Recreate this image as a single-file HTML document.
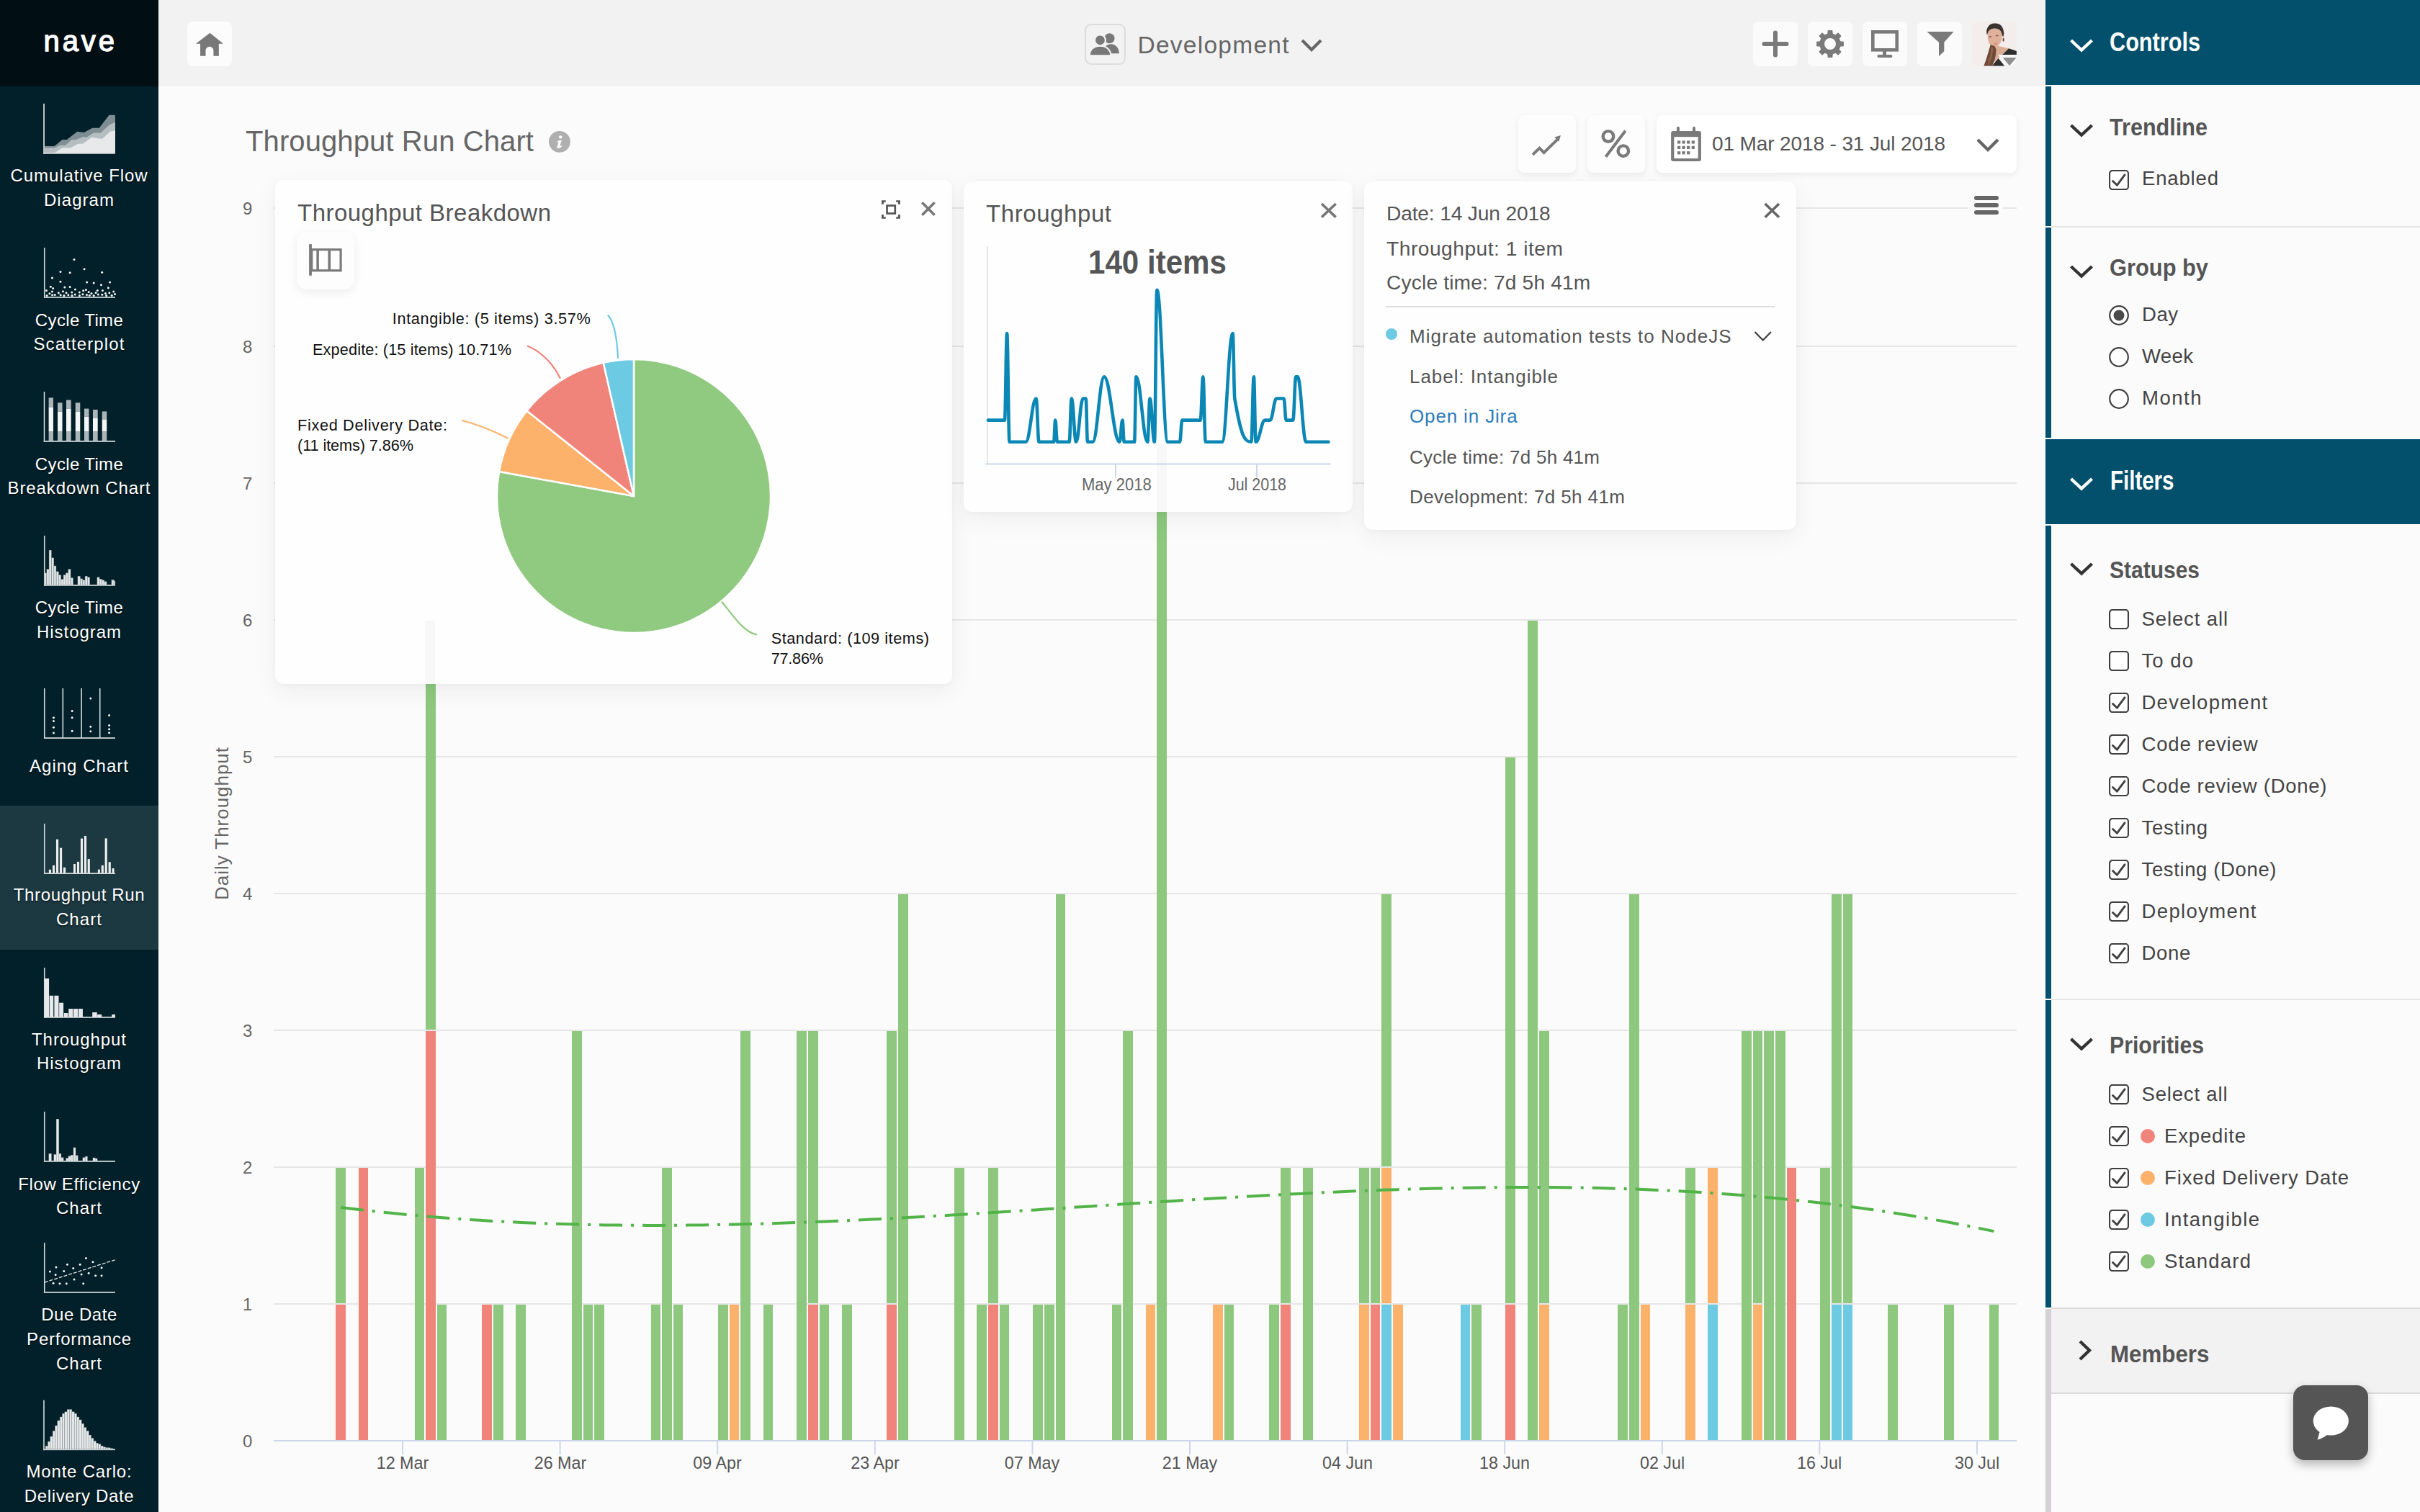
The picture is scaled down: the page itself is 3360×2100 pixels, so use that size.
<!DOCTYPE html>
<html><head><meta charset="utf-8"><style>
html,body{margin:0;padding:0;}
body{width:3360px;height:2100px;overflow:hidden;position:relative;background:#fbfbfb;font-family:'Liberation Sans', sans-serif;}
</style></head><body><div style="position:absolute;left:0px;top:0px;width:220px;height:2100px;background:#02202a"></div><div style="position:absolute;left:0px;top:0px;width:220px;height:120px;background:#010f15"></div><div style="position:absolute;left:0px;top:1119px;width:220px;height:200px;background:#1c3941"></div><div id="t0" style="position:absolute;top:37.30px;font-size:40px;line-height:40px;color:#fff;font-weight:400;white-space:pre;letter-spacing:3.917px;-webkit-text-stroke:1.3px #fff;left:60.50px;">nave</div><svg style="position:absolute;left:50px;top:134px;" width="120" height="120" viewBox="0 0 1512 1512"><rect x="128" y="125" width="22" height="880" style="fill:#d5dadb"/><rect x="128" y="981" width="1257" height="24" style="fill:#d5dadb"/><polygon fill="#7f8e93" points="150,870 320,870 460,755 540,755 720,615 840,630 985,550 1105,550 1280,325 1385,325 1385,982 150,982"/><polygon fill="#b5bfc2" points="150,900 320,900 420,855 515,855 625,755 690,760 830,705 880,715 1010,635 1130,635 1290,490 1385,455 1385,982 150,982"/><polygon fill="#e8e9ea" points="330,982 460,900 600,900 735,830 820,825 975,715 1080,735 1160,740 1300,610 1385,600 1385,982"/></svg><svg style="position:absolute;left:50px;top:334px;" width="120" height="120" viewBox="0 0 1512 1512"><rect x="138" y="125" width="20" height="880" style="fill:#d5dadb"/><rect x="138" y="983" width="1247" height="22" style="fill:#d5dadb"/><circle cx="667" cy="333" r="19" fill="#f4f5f5"/><circle cx="845" cy="500" r="19" fill="#f4f5f5"/><circle cx="428" cy="548" r="19" fill="#f4f5f5"/><circle cx="594" cy="563" r="19" fill="#f4f5f5"/><circle cx="1155" cy="557" r="19" fill="#f4f5f5"/><circle cx="283" cy="655" r="19" fill="#f4f5f5"/><circle cx="428" cy="720" r="19" fill="#f4f5f5"/><circle cx="890" cy="732" r="19" fill="#f4f5f5"/><circle cx="1010" cy="742" r="19" fill="#f4f5f5"/><circle cx="1292" cy="730" r="19" fill="#f4f5f5"/><circle cx="1140" cy="777" r="19" fill="#f4f5f5"/><circle cx="256" cy="810" r="19" fill="#f4f5f5"/><circle cx="298" cy="838" r="19" fill="#f4f5f5"/><circle cx="502" cy="818" r="19" fill="#f4f5f5"/><circle cx="594" cy="812" r="19" fill="#f4f5f5"/><circle cx="1265" cy="830" r="19" fill="#f4f5f5"/><circle cx="182" cy="875" r="19" fill="#f4f5f5"/><circle cx="686" cy="858" r="19" fill="#f4f5f5"/><circle cx="828" cy="878" r="19" fill="#f4f5f5"/><circle cx="875" cy="862" r="19" fill="#f4f5f5"/><circle cx="1075" cy="877" r="19" fill="#f4f5f5"/><circle cx="1165" cy="875" r="19" fill="#f4f5f5"/><circle cx="283" cy="895" r="19" fill="#f4f5f5"/><circle cx="472" cy="890" r="19" fill="#f4f5f5"/><circle cx="922" cy="900" r="19" fill="#f4f5f5"/><circle cx="1357" cy="895" r="19" fill="#f4f5f5"/><circle cx="238" cy="928" r="19" fill="#f4f5f5"/><circle cx="395" cy="917" r="19" fill="#f4f5f5"/><circle cx="530" cy="917" r="19" fill="#f4f5f5"/><circle cx="627" cy="908" r="19" fill="#f4f5f5"/><circle cx="760" cy="907" r="19" fill="#f4f5f5"/><circle cx="970" cy="925" r="19" fill="#f4f5f5"/><circle cx="1048" cy="915" r="19" fill="#f4f5f5"/><circle cx="1215" cy="925" r="19" fill="#f4f5f5"/><circle cx="1283" cy="918" r="19" fill="#f4f5f5"/><circle cx="190" cy="965" r="19" fill="#f4f5f5"/><circle cx="285" cy="955" r="19" fill="#f4f5f5"/><circle cx="330" cy="950" r="19" fill="#f4f5f5"/><circle cx="430" cy="955" r="19" fill="#f4f5f5"/><circle cx="490" cy="965" r="19" fill="#f4f5f5"/><circle cx="565" cy="955" r="19" fill="#f4f5f5"/><circle cx="630" cy="965" r="19" fill="#f4f5f5"/><circle cx="683" cy="945" r="19" fill="#f4f5f5"/><circle cx="762" cy="965" r="19" fill="#f4f5f5"/><circle cx="818" cy="942" r="19" fill="#f4f5f5"/><circle cx="888" cy="950" r="19" fill="#f4f5f5"/><circle cx="937" cy="960" r="19" fill="#f4f5f5"/><circle cx="1010" cy="965" r="19" fill="#f4f5f5"/><circle cx="1088" cy="945" r="19" fill="#f4f5f5"/><circle cx="1157" cy="948" r="19" fill="#f4f5f5"/><circle cx="1230" cy="965" r="19" fill="#f4f5f5"/><circle cx="1325" cy="960" r="19" fill="#f4f5f5"/><circle cx="1380" cy="940" r="19" fill="#f4f5f5"/></svg><svg style="position:absolute;left:50px;top:534px;" width="120" height="120" viewBox="0 0 1512 1512"><rect x="135" y="126" width="20" height="879" style="fill:#d5dadb"/><rect x="135" y="983" width="1251" height="22" style="fill:#d5dadb"/><rect x="222" y="232" width="80" height="164" fill="#aab5b8"/><rect x="222" y="396" width="80" height="431" fill="#f5f6f6"/><rect x="222" y="827" width="80" height="160" fill="#aab5b8"/><rect x="378" y="319" width="82" height="158" fill="#aab5b8"/><rect x="378" y="477" width="82" height="350" fill="#f5f6f6"/><rect x="378" y="827" width="82" height="160" fill="#aab5b8"/><rect x="529" y="271" width="84" height="152" fill="#aab5b8"/><rect x="529" y="423" width="84" height="404" fill="#f5f6f6"/><rect x="529" y="827" width="84" height="160" fill="#aab5b8"/><rect x="690" y="319" width="82" height="158" fill="#aab5b8"/><rect x="690" y="477" width="82" height="350" fill="#f5f6f6"/><rect x="690" y="827" width="82" height="160" fill="#aab5b8"/><rect x="844" y="423" width="82" height="140" fill="#aab5b8"/><rect x="844" y="563" width="82" height="264" fill="#f5f6f6"/><rect x="844" y="827" width="82" height="160" fill="#aab5b8"/><rect x="995" y="441" width="85" height="151" fill="#aab5b8"/><rect x="995" y="592" width="85" height="235" fill="#f5f6f6"/><rect x="995" y="827" width="85" height="160" fill="#aab5b8"/><rect x="1156" y="472" width="82" height="138" fill="#aab5b8"/><rect x="1156" y="610" width="82" height="217" fill="#f5f6f6"/><rect x="1156" y="827" width="82" height="160" fill="#aab5b8"/></svg><svg style="position:absolute;left:50px;top:734px;" width="120" height="120" viewBox="0 0 1512 1512"><rect x="138" y="125" width="20" height="880" style="fill:#d5dadb"/><rect x="138" y="983" width="1247" height="22" style="fill:#d5dadb"/><rect x="150" y="780" width="35" height="210" fill="#e3e6e7" stroke="#8a979b" stroke-width="5"/><rect x="188" y="715" width="40" height="275" fill="#e3e6e7" stroke="#8a979b" stroke-width="5"/><rect x="228" y="380" width="40" height="610" fill="#e3e6e7" stroke="#8a979b" stroke-width="5"/><rect x="272" y="515" width="40" height="475" fill="#e3e6e7" stroke="#8a979b" stroke-width="5"/><rect x="315" y="655" width="37" height="335" fill="#e3e6e7" stroke="#8a979b" stroke-width="5"/><rect x="355" y="755" width="40" height="235" fill="#e3e6e7" stroke="#8a979b" stroke-width="5"/><rect x="398" y="815" width="39" height="175" fill="#e3e6e7" stroke="#8a979b" stroke-width="5"/><rect x="440" y="890" width="40" height="100" fill="#e3e6e7" stroke="#8a979b" stroke-width="5"/><rect x="480" y="815" width="40" height="175" fill="#e3e6e7" stroke="#8a979b" stroke-width="5"/><rect x="523" y="780" width="40" height="210" fill="#e3e6e7" stroke="#8a979b" stroke-width="5"/><rect x="565" y="715" width="40" height="275" fill="#e3e6e7" stroke="#8a979b" stroke-width="5"/><rect x="610" y="865" width="38" height="125" fill="#e3e6e7" stroke="#8a979b" stroke-width="5"/><rect x="730" y="835" width="42" height="155" fill="#e3e6e7" stroke="#8a979b" stroke-width="5"/><rect x="775" y="880" width="40" height="110" fill="#e3e6e7" stroke="#8a979b" stroke-width="5"/><rect x="818" y="905" width="37" height="85" fill="#e3e6e7" stroke="#8a979b" stroke-width="5"/><rect x="858" y="835" width="40" height="155" fill="#e3e6e7" stroke="#8a979b" stroke-width="5"/><rect x="900" y="855" width="40" height="135" fill="#e3e6e7" stroke="#8a979b" stroke-width="5"/><rect x="1070" y="855" width="40" height="135" fill="#e3e6e7" stroke="#8a979b" stroke-width="5"/><rect x="1112" y="885" width="40" height="105" fill="#e3e6e7" stroke="#8a979b" stroke-width="5"/><rect x="1155" y="905" width="40" height="85" fill="#e3e6e7" stroke="#8a979b" stroke-width="5"/><rect x="1195" y="930" width="40" height="60" fill="#e3e6e7" stroke="#8a979b" stroke-width="5"/><rect x="1322" y="900" width="40" height="90" fill="#e3e6e7" stroke="#8a979b" stroke-width="5"/><rect x="1362" y="918" width="23" height="72" fill="#e3e6e7" stroke="#8a979b" stroke-width="5"/></svg><svg style="position:absolute;left:50px;top:946px;" width="120" height="120" viewBox="0 0 1512 1512"><rect x="138" y="985" width="1247" height="22" style="fill:#d5dadb"/><rect x="138" y="125" width="20" height="875" style="fill:#d5dadb"/><rect x="460" y="125" width="20" height="875" style="fill:#d5dadb"/><rect x="785" y="125" width="20" height="875" style="fill:#d5dadb"/><rect x="1108" y="125" width="20" height="875" style="fill:#d5dadb"/><circle cx="308" cy="640" r="19" fill="#f4f5f5"/><circle cx="308" cy="698" r="19" fill="#f4f5f5"/><circle cx="308" cy="810" r="19" fill="#f4f5f5"/><circle cx="308" cy="907" r="19" fill="#f4f5f5"/><circle cx="632" cy="522" r="19" fill="#f4f5f5"/><circle cx="632" cy="638" r="19" fill="#f4f5f5"/><circle cx="632" cy="872" r="19" fill="#f4f5f5"/><circle cx="955" cy="302" r="19" fill="#f4f5f5"/><circle cx="955" cy="798" r="19" fill="#f4f5f5"/><circle cx="955" cy="880" r="19" fill="#f4f5f5"/><circle cx="1280" cy="598" r="19" fill="#f4f5f5"/><circle cx="1280" cy="775" r="19" fill="#f4f5f5"/><circle cx="1280" cy="840" r="19" fill="#f4f5f5"/><circle cx="1280" cy="905" r="19" fill="#f4f5f5"/></svg><svg style="position:absolute;left:50px;top:1134px;" width="120" height="120" viewBox="0 0 1512 1512"><rect x="138" y="125" width="20" height="883" style="fill:#d5dadb"/><rect x="138" y="986" width="1247" height="22" style="fill:#d5dadb"/><rect x="225" y="930" width="40" height="60" fill="#eceeee"/><rect x="290" y="855" width="38" height="135" fill="#eceeee"/><rect x="352" y="400" width="40" height="590" fill="#eceeee"/><rect x="415" y="550" width="40" height="440" fill="#eceeee"/><rect x="478" y="892" width="40" height="98" fill="#eceeee"/><rect x="655" y="832" width="38" height="158" fill="#eceeee"/><rect x="717" y="792" width="40" height="198" fill="#eceeee"/><rect x="780" y="385" width="40" height="605" fill="#eceeee"/><rect x="843" y="340" width="40" height="650" fill="#eceeee"/><rect x="903" y="745" width="40" height="245" fill="#eceeee"/><rect x="1082" y="928" width="38" height="62" fill="#eceeee"/><rect x="1143" y="855" width="40" height="135" fill="#eceeee"/><rect x="1205" y="383" width="40" height="607" fill="#eceeee"/><rect x="1268" y="797" width="40" height="193" fill="#eceeee"/><rect x="1330" y="907" width="38" height="83" fill="#eceeee"/></svg><svg style="position:absolute;left:50px;top:1334px;" width="120" height="120" viewBox="0 0 1512 1512"><rect x="138" y="125" width="20" height="880" style="fill:#d5dadb"/><rect x="138" y="983" width="1247" height="22" style="fill:#d5dadb"/><rect x="150" y="315" width="78" height="675" fill="#e6e8e9"/><rect x="235" y="615" width="70" height="375" fill="#e6e8e9"/><rect x="320" y="615" width="77" height="375" fill="#e6e8e9"/><rect x="405" y="740" width="75" height="250" fill="#e6e8e9"/><rect x="490" y="920" width="70" height="70" fill="#e6e8e9"/><rect x="570" y="845" width="75" height="145" fill="#e6e8e9"/><rect x="655" y="845" width="77" height="145" fill="#e6e8e9"/><rect x="742" y="845" width="76" height="145" fill="#e6e8e9"/><rect x="985" y="908" width="83" height="82" fill="#e6e8e9"/><rect x="1072" y="945" width="78" height="45" fill="#e6e8e9"/><rect x="1325" y="945" width="60" height="45" fill="#e6e8e9"/></svg><svg style="position:absolute;left:50px;top:1534px;" width="120" height="120" viewBox="0 0 1512 1512"><rect x="138" y="125" width="20" height="880" style="fill:#d5dadb"/><rect x="138" y="983" width="1247" height="22" style="fill:#d5dadb"/><rect x="225" y="860" width="45" height="130" fill="#e6e8e9" stroke="#9aa5a8" stroke-width="4"/><rect x="313" y="875" width="42" height="115" fill="#e6e8e9" stroke="#9aa5a8" stroke-width="4"/><rect x="355" y="255" width="45" height="735" fill="#e6e8e9" stroke="#9aa5a8" stroke-width="4"/><rect x="400" y="860" width="40" height="130" fill="#e6e8e9" stroke="#9aa5a8" stroke-width="4"/><rect x="440" y="930" width="40" height="60" fill="#e6e8e9" stroke="#9aa5a8" stroke-width="4"/><rect x="527" y="940" width="40" height="50" fill="#e6e8e9" stroke="#9aa5a8" stroke-width="4"/><rect x="567" y="905" width="40" height="85" fill="#e6e8e9" stroke="#9aa5a8" stroke-width="4"/><rect x="607" y="885" width="43" height="105" fill="#e6e8e9" stroke="#9aa5a8" stroke-width="4"/><rect x="655" y="755" width="38" height="235" fill="#e6e8e9" stroke="#9aa5a8" stroke-width="4"/><rect x="697" y="893" width="36" height="97" fill="#e6e8e9" stroke="#9aa5a8" stroke-width="4"/><rect x="818" y="930" width="39" height="60" fill="#e6e8e9" stroke="#9aa5a8" stroke-width="4"/><rect x="860" y="910" width="40" height="80" fill="#e6e8e9" stroke="#9aa5a8" stroke-width="4"/><rect x="995" y="933" width="40" height="57" fill="#e6e8e9" stroke="#9aa5a8" stroke-width="4"/><rect x="1035" y="945" width="37" height="45" fill="#e6e8e9" stroke="#9aa5a8" stroke-width="4"/></svg><svg style="position:absolute;left:50px;top:1716px;" width="120" height="120" viewBox="0 0 1512 1512"><rect x="138" y="125" width="20" height="880" style="fill:#d5dadb"/><rect x="138" y="983" width="1247" height="22" style="fill:#d5dadb"/><line x1="150" y1="820" x2="1385" y2="425" stroke="#e8eaeb" stroke-width="16" stroke-dasharray="62,26"/><circle cx="875" cy="398" r="19" fill="#f4f5f5"/><circle cx="995" cy="462" r="19" fill="#f4f5f5"/><circle cx="548" cy="508" r="19" fill="#f4f5f5"/><circle cx="770" cy="508" r="19" fill="#f4f5f5"/><circle cx="352" cy="555" r="19" fill="#f4f5f5"/><circle cx="652" cy="572" r="19" fill="#f4f5f5"/><circle cx="1147" cy="565" r="19" fill="#f4f5f5"/><circle cx="245" cy="630" r="19" fill="#f4f5f5"/><circle cx="488" cy="625" r="19" fill="#f4f5f5"/><circle cx="342" cy="688" r="19" fill="#f4f5f5"/><circle cx="795" cy="680" r="19" fill="#f4f5f5"/><circle cx="922" cy="658" r="19" fill="#f4f5f5"/><circle cx="1042" cy="703" r="19" fill="#f4f5f5"/><circle cx="1147" cy="703" r="19" fill="#f4f5f5"/><circle cx="668" cy="768" r="19" fill="#f4f5f5"/><circle cx="303" cy="835" r="19" fill="#f4f5f5"/><circle cx="415" cy="842" r="19" fill="#f4f5f5"/><circle cx="533" cy="840" r="19" fill="#f4f5f5"/><circle cx="828" cy="842" r="19" fill="#f4f5f5"/></svg><svg style="position:absolute;left:50px;top:1934px;" width="120" height="120" viewBox="0 0 1512 1512"><rect x="128" y="135" width="20" height="875" style="fill:#d5dadb"/><rect x="128" y="988" width="1257" height="22" style="fill:#d5dadb"/><rect x="165.0" y="935" width="42.1" height="57" fill="#e6e8e9" stroke="#7d8b8f" stroke-width="5"/><rect x="207.1" y="858" width="42.1" height="134" fill="#e6e8e9" stroke="#7d8b8f" stroke-width="5"/><rect x="249.2" y="770" width="42.1" height="222" fill="#e6e8e9" stroke="#7d8b8f" stroke-width="5"/><rect x="291.3" y="672" width="42.1" height="320" fill="#e6e8e9" stroke="#7d8b8f" stroke-width="5"/><rect x="333.4" y="580" width="42.1" height="412" fill="#e6e8e9" stroke="#7d8b8f" stroke-width="5"/><rect x="375.5" y="492" width="42.1" height="500" fill="#e6e8e9" stroke="#7d8b8f" stroke-width="5"/><rect x="417.6" y="428" width="42.1" height="564" fill="#e6e8e9" stroke="#7d8b8f" stroke-width="5"/><rect x="459.7" y="368" width="42.1" height="624" fill="#e6e8e9" stroke="#7d8b8f" stroke-width="5"/><rect x="501.8" y="338" width="42.1" height="654" fill="#e6e8e9" stroke="#7d8b8f" stroke-width="5"/><rect x="543.9" y="298" width="42.1" height="694" fill="#e6e8e9" stroke="#7d8b8f" stroke-width="5"/><rect x="586.0" y="298" width="42.1" height="694" fill="#e6e8e9" stroke="#7d8b8f" stroke-width="5"/><rect x="628.1" y="338" width="42.1" height="654" fill="#e6e8e9" stroke="#7d8b8f" stroke-width="5"/><rect x="670.2" y="368" width="42.1" height="624" fill="#e6e8e9" stroke="#7d8b8f" stroke-width="5"/><rect x="712.3" y="428" width="42.1" height="564" fill="#e6e8e9" stroke="#7d8b8f" stroke-width="5"/><rect x="754.4" y="478" width="42.1" height="514" fill="#e6e8e9" stroke="#7d8b8f" stroke-width="5"/><rect x="796.5" y="545" width="42.1" height="447" fill="#e6e8e9" stroke="#7d8b8f" stroke-width="5"/><rect x="838.6" y="612" width="42.1" height="380" fill="#e6e8e9" stroke="#7d8b8f" stroke-width="5"/><rect x="880.7" y="672" width="42.1" height="320" fill="#e6e8e9" stroke="#7d8b8f" stroke-width="5"/><rect x="922.8" y="745" width="42.1" height="247" fill="#e6e8e9" stroke="#7d8b8f" stroke-width="5"/><rect x="964.9" y="800" width="42.1" height="192" fill="#e6e8e9" stroke="#7d8b8f" stroke-width="5"/><rect x="1007.0" y="848" width="42.1" height="144" fill="#e6e8e9" stroke="#7d8b8f" stroke-width="5"/><rect x="1049.1" y="885" width="42.1" height="107" fill="#e6e8e9" stroke="#7d8b8f" stroke-width="5"/><rect x="1091.2" y="905" width="42.1" height="87" fill="#e6e8e9" stroke="#7d8b8f" stroke-width="5"/><rect x="1133.3" y="935" width="42.1" height="57" fill="#e6e8e9" stroke="#7d8b8f" stroke-width="5"/><rect x="1175.4" y="955" width="42.1" height="37" fill="#e6e8e9" stroke="#7d8b8f" stroke-width="5"/><rect x="1217.5" y="965" width="42.1" height="27" fill="#e6e8e9" stroke="#7d8b8f" stroke-width="5"/><rect x="1259.6" y="968" width="42.1" height="24" fill="#e6e8e9" stroke="#7d8b8f" stroke-width="5"/><rect x="1301.7" y="978" width="42.1" height="14" fill="#e6e8e9" stroke="#7d8b8f" stroke-width="5"/></svg><div id="t1" style="position:absolute;top:232.10px;font-size:24px;line-height:24px;color:#fff;font-weight:400;white-space:pre;letter-spacing:0.901px;text-shadow:0 2px 2px rgba(0,0,0,0.55);left:-90.00px;width:400px;text-align:center;">Cumulative Flow</div><div id="t2" style="position:absolute;top:266.10px;font-size:24px;line-height:24px;color:#fff;font-weight:400;white-space:pre;letter-spacing:1.049px;text-shadow:0 2px 2px rgba(0,0,0,0.55);left:-90.00px;width:400px;text-align:center;">Diagram</div><div id="t3" style="position:absolute;top:432.50px;font-size:24px;line-height:24px;color:#fff;font-weight:400;white-space:pre;letter-spacing:0.368px;text-shadow:0 2px 2px rgba(0,0,0,0.55);left:-90.00px;width:400px;text-align:center;">Cycle Time</div><div id="t4" style="position:absolute;top:466.10px;font-size:24px;line-height:24px;color:#fff;font-weight:400;white-space:pre;letter-spacing:1.127px;text-shadow:0 2px 2px rgba(0,0,0,0.55);left:-90.00px;width:400px;text-align:center;">Scatterplot</div><div id="t5" style="position:absolute;top:633.10px;font-size:24px;line-height:24px;color:#fff;font-weight:400;white-space:pre;letter-spacing:0.368px;text-shadow:0 2px 2px rgba(0,0,0,0.55);left:-90.00px;width:400px;text-align:center;">Cycle Time</div><div id="t6" style="position:absolute;top:666.10px;font-size:24px;line-height:24px;color:#fff;font-weight:400;white-space:pre;letter-spacing:0.897px;text-shadow:0 2px 2px rgba(0,0,0,0.55);left:-90.00px;width:400px;text-align:center;">Breakdown Chart</div><div id="t7" style="position:absolute;top:832.10px;font-size:24px;line-height:24px;color:#fff;font-weight:400;white-space:pre;letter-spacing:0.368px;text-shadow:0 2px 2px rgba(0,0,0,0.55);left:-90.00px;width:400px;text-align:center;">Cycle Time</div><div id="t8" style="position:absolute;top:866.10px;font-size:24px;line-height:24px;color:#fff;font-weight:400;white-space:pre;letter-spacing:0.955px;text-shadow:0 2px 2px rgba(0,0,0,0.55);left:-90.00px;width:400px;text-align:center;">Histogram</div><div id="t9" style="position:absolute;top:1052.10px;font-size:24px;line-height:24px;color:#fff;font-weight:400;white-space:pre;letter-spacing:1.025px;text-shadow:0 2px 2px rgba(0,0,0,0.55);left:-90.00px;width:400px;text-align:center;">Aging Chart</div><div id="t10" style="position:absolute;top:1231.10px;font-size:24px;line-height:24px;color:#fff;font-weight:400;white-space:pre;letter-spacing:0.657px;text-shadow:0 2px 2px rgba(0,0,0,0.55);left:-90.00px;width:400px;text-align:center;">Throughput Run</div><div id="t11" style="position:absolute;top:1265.10px;font-size:24px;line-height:24px;color:#fff;font-weight:400;white-space:pre;letter-spacing:1.078px;text-shadow:0 2px 2px rgba(0,0,0,0.55);left:-90.00px;width:400px;text-align:center;">Chart</div><div id="t12" style="position:absolute;top:1432.10px;font-size:24px;line-height:24px;color:#fff;font-weight:400;white-space:pre;letter-spacing:0.915px;text-shadow:0 2px 2px rgba(0,0,0,0.55);left:-90.00px;width:400px;text-align:center;">Throughput</div><div id="t13" style="position:absolute;top:1465.10px;font-size:24px;line-height:24px;color:#fff;font-weight:400;white-space:pre;letter-spacing:0.955px;text-shadow:0 2px 2px rgba(0,0,0,0.55);left:-90.00px;width:400px;text-align:center;">Histogram</div><div id="t14" style="position:absolute;top:1632.70px;font-size:24px;line-height:24px;color:#fff;font-weight:400;white-space:pre;letter-spacing:0.671px;text-shadow:0 2px 2px rgba(0,0,0,0.55);left:-90.00px;width:400px;text-align:center;">Flow Efficiency</div><div id="t15" style="position:absolute;top:1666.10px;font-size:24px;line-height:24px;color:#fff;font-weight:400;white-space:pre;letter-spacing:1.078px;text-shadow:0 2px 2px rgba(0,0,0,0.55);left:-90.00px;width:400px;text-align:center;">Chart</div><div id="t16" style="position:absolute;top:1814.10px;font-size:24px;line-height:24px;color:#fff;font-weight:400;white-space:pre;letter-spacing:0.516px;text-shadow:0 2px 2px rgba(0,0,0,0.55);left:-90.00px;width:400px;text-align:center;">Due Date</div><div id="t17" style="position:absolute;top:1848.10px;font-size:24px;line-height:24px;color:#fff;font-weight:400;white-space:pre;letter-spacing:0.761px;text-shadow:0 2px 2px rgba(0,0,0,0.55);left:-90.00px;width:400px;text-align:center;">Performance</div><div id="t18" style="position:absolute;top:1882.10px;font-size:24px;line-height:24px;color:#fff;font-weight:400;white-space:pre;letter-spacing:1.078px;text-shadow:0 2px 2px rgba(0,0,0,0.55);left:-90.00px;width:400px;text-align:center;">Chart</div><div id="t19" style="position:absolute;top:2032.10px;font-size:24px;line-height:24px;color:#fff;font-weight:400;white-space:pre;letter-spacing:0.783px;text-shadow:0 2px 2px rgba(0,0,0,0.55);left:-90.00px;width:400px;text-align:center;">Monte Carlo:</div><div id="t20" style="position:absolute;top:2066.10px;font-size:24px;line-height:24px;color:#fff;font-weight:400;white-space:pre;letter-spacing:0.663px;text-shadow:0 2px 2px rgba(0,0,0,0.55);left:-90.00px;width:400px;text-align:center;">Delivery Date</div><div style="position:absolute;left:220px;top:0px;width:2620px;height:120px;background:#f2f2f2"></div><div style="position:absolute;left:260px;top:30px;width:62px;height:62px;background:#fcfcfc;border-radius:8px"></div><svg style="position:absolute;left:255px;top:25px;" width="75" height="75" viewBox="0 0 1512 1512"><path fill="#787878" d="M340,720 L735,420 L1110,720 L985,720 L985,1065 L835,1065 L835,910 A110,110 0 0 0 615,910 L615,1065 L465,1065 L465,720 Z"/></svg><div style="position:absolute;left:1506px;top:33px;width:53px;height:53px;border:2px solid #dcdcdc;border-radius:9px"></div><svg style="position:absolute;left:1480px;top:20px;" width="380" height="90" viewBox="0 0 2420 573"><path fill="#787878" d="M330,345 C330,290 360,262 400,262 C440,262 470,300 470,345 Z"/><circle cx="385" cy="212" r="45" fill="#787878"/><path fill="#787878" stroke="#f2f2f2" stroke-width="14" d="M208,365 C208,310 250,278 302,278 C352,278 397,310 397,365 Z"/><circle cx="302" cy="228" r="48" fill="#787878" stroke="#f2f2f2" stroke-width="14"/></svg><div id="t21" style="position:absolute;top:46.03px;font-size:33.5px;line-height:33.5px;color:#666;font-weight:400;white-space:pre;letter-spacing:1.261px;left:1579.50px;">Development</div><svg style="position:absolute;left:1800px;top:45px;" width="40" height="35" viewBox="0 0 40 35"><polyline points="8,11 21,24 34,11" fill="none" stroke="#666" stroke-width="4.2"/></svg><div style="position:absolute;left:2434px;top:30px;width:62px;height:62px;background:#fbfbfb;border-radius:8px"></div><div style="position:absolute;left:2510px;top:30px;width:62px;height:62px;background:#fbfbfb;border-radius:8px"></div><div style="position:absolute;left:2586px;top:30px;width:62px;height:62px;background:#fbfbfb;border-radius:8px"></div><div style="position:absolute;left:2662px;top:30px;width:62px;height:62px;background:#fbfbfb;border-radius:8px"></div><svg style="position:absolute;left:2434px;top:30px;" width="62" height="62" viewBox="0 0 62 62"><path d="M31,15.5 V46.5 M15.5,31 H46.5" stroke="#7a7a7a" stroke-width="6" stroke-linecap="round"/></svg><svg style="position:absolute;left:2510px;top:30px;" width="62" height="62" viewBox="0 0 62 62"><path fill="#7a7a7a" fill-rule="evenodd" d="M27.20,16.70 L27.75,12.08 L34.25,12.08 L34.80,16.70 L38.42,18.20 L42.08,15.32 L46.68,19.92 L43.80,23.58 L45.30,27.20 L49.92,27.75 L49.92,34.25 L45.30,34.80 L43.80,38.42 L46.68,42.08 L42.08,46.68 L38.42,43.80 L34.80,45.30 L34.25,49.92 L27.75,49.92 L27.20,45.30 L23.58,43.80 L19.92,46.68 L15.32,42.08 L18.20,38.42 L16.70,34.80 L12.08,34.25 L12.08,27.75 L16.70,27.20 L18.20,23.58 L15.32,19.92 L19.92,15.32 L23.58,18.20 Z M39,31 A8,8 0 1 0 23,31 A8,8 0 1 0 39,31 Z"/></svg><svg style="position:absolute;left:2586px;top:30px;" width="62" height="62" viewBox="0 0 62 62"><rect x="14.3" y="14.3" width="33.4" height="25" fill="none" stroke="#7a7a7a" stroke-width="4.6"/><rect x="28" y="41" width="5" height="5" fill="#7a7a7a"/><rect x="20.4" y="46" width="21" height="4" rx="2" fill="#7a7a7a"/></svg><svg style="position:absolute;left:2662px;top:30px;" width="62" height="62" viewBox="0 0 62 62"><path fill="#7a7a7a" d="M13.4,14 L50.6,14 L37.3,28.8 L37.3,41.2 L30,47.9 L30,28.8 Z"/></svg><svg style="position:absolute;left:2730px;top:25px;" width="80" height="75" viewBox="0 0 1613 1512"><defs><clipPath id="avc"><rect x="165" y="100" width="1245" height="1245" rx="150"/></clipPath></defs><g clip-path="url(#avc)"><rect x="0" y="0" width="1613" height="1512" fill="#f3eeeb"/><path fill="#dcae98" d="M690,760 L905,785 L1190,850 L1010,1030 L900,1130 L810,1240 L700,1000 Z"/><path fill="#dfb09a" d="M598,400 C620,320 700,290 800,290 C930,290 1000,350 1005,470 C1010,640 930,800 800,810 C700,815 620,720 600,560 Z"/><ellipse cx="672" cy="525" rx="42" ry="20" fill="#8a6a60"/><ellipse cx="862" cy="495" rx="42" ry="20" fill="#8a6a60"/><ellipse cx="830" cy="722" rx="55" ry="22" fill="#d98a78"/><ellipse cx="1040" cy="610" rx="22" ry="55" fill="#6e4a38"/><path fill="#3b3330" d="M585,480 C545,360 580,240 680,175 C740,140 860,140 930,175 C1010,220 1050,320 1055,440 L1035,540 L1000,470 C990,360 930,300 800,290 C700,290 630,330 600,420 Z"/><path fill="#6e4a38" d="M680,745 L800,790 L838,880 L830,1010 L790,1200 L725,1345 L490,1345 L560,1150 L620,950 Z"/><path fill="#8a6048" d="M700,800 L760,830 L720,1100 L640,1300 L600,1300 L680,1000 Z"/><path fill="#2e2e2e" d="M1190,850 L1410,925 L1410,1030 L1010,1030 Z M900,1130 L1075,1345 L720,1345 L805,1240 Z"/><path fill="#f7f7f7" d="M895,1030 L1410,1030 L1410,1345 L1080,1345 Z"/><path fill="#8f8f8f" d="M1020,1110 L1405,1110 L1210,1335 Z"/></g></svg><div id="t22" style="position:absolute;top:176.00px;font-size:40px;line-height:40px;color:#666;font-weight:400;white-space:pre;letter-spacing:0.104px;left:341.00px;">Throughput Run Chart</div><svg style="position:absolute;left:755px;top:175px;" width="45" height="45" viewBox="0 0 1512 1512"><circle cx="735" cy="735" r="500" fill="#afafaf"/><ellipse cx="780" cy="515" rx="78" ry="72" fill="#fff"/><path fill="#fff" d="M605,740 C650,700 730,668 800,662 L838,662 L752,905 C742,945 775,945 842,900 L858,925 C800,995 725,1045 668,1045 C618,1045 606,1000 628,940 L690,765 C682,742 645,752 612,765 Z"/></svg><div style="position:absolute;left:2108px;top:160px;width:80px;height:80px;background:#fdfdfd;border-radius:8px;box-shadow:0 3px 8px rgba(0,0,0,0.07);"></div><div style="position:absolute;left:2204px;top:160px;width:80px;height:80px;background:#fdfdfd;border-radius:8px;box-shadow:0 3px 8px rgba(0,0,0,0.07);"></div><div style="position:absolute;left:2300px;top:160px;width:500px;height:80px;background:#fff;border-radius:8px;box-shadow:0 3px 8px rgba(0,0,0,0.07);"></div><svg style="position:absolute;left:2108px;top:160px;" width="176" height="80" viewBox="0 0 2420 1100"><polyline points="275,755 405,630 490,715 745,465" fill="none" stroke="#7a7a7a" stroke-width="55"/><polygon points="690,420 810,385 775,505" fill="#7a7a7a"/><circle cx="1718" cy="405" r="100" fill="none" stroke="#7a7a7a" stroke-width="60"/><circle cx="2005" cy="683" r="100" fill="none" stroke="#7a7a7a" stroke-width="60"/><line x1="1670" y1="795" x2="2045" y2="300" stroke="#7a7a7a" stroke-width="55"/></svg><svg style="position:absolute;left:2300px;top:160px;" width="100" height="80" viewBox="0 0 1890 1512"><rect x="380" y="415" width="790" height="795" rx="60" fill="#7a7a7a"/><rect x="460" y="570" width="630" height="565" fill="#fff"/><rect x="528" y="300" width="75" height="140" rx="37" fill="#7a7a7a"/><rect x="945" y="300" width="75" height="140" rx="37" fill="#7a7a7a"/><rect x="548" y="668" width="80" height="80" fill="#7a7a7a"/><rect x="670" y="668" width="80" height="80" fill="#7a7a7a"/><rect x="795" y="668" width="80" height="80" fill="#7a7a7a"/><rect x="920" y="668" width="80" height="80" fill="#7a7a7a"/><rect x="548" y="808" width="80" height="80" fill="#7a7a7a"/><rect x="670" y="808" width="80" height="80" fill="#7a7a7a"/><rect x="795" y="808" width="80" height="80" fill="#7a7a7a"/><rect x="920" y="808" width="80" height="80" fill="#7a7a7a"/><rect x="548" y="948" width="80" height="80" fill="#7a7a7a"/><rect x="670" y="948" width="80" height="80" fill="#7a7a7a"/><rect x="795" y="948" width="80" height="80" fill="#7a7a7a"/></svg><div id="t23" style="position:absolute;top:186.20px;font-size:28px;line-height:28px;color:#555;font-weight:400;white-space:pre;letter-spacing:-0.120px;left:2377.00px;">01 Mar 2018 - 31 Jul 2018</div><svg style="position:absolute;left:2740px;top:185px;" width="40" height="32" viewBox="0 0 40 32"><polyline points="6,9 20,23 34,9" fill="none" stroke="#666" stroke-width="4.4"/></svg><svg style="position:absolute;left:0px;top:0px;shape-rendering:auto" width="3360" height="2100" viewBox="0 0 3360 2100"><rect x="380" y="1810.0" width="2420" height="2" fill="#e6e6e6"/><rect x="380" y="1620.0" width="2420" height="2" fill="#e6e6e6"/><rect x="380" y="1430.0" width="2420" height="2" fill="#e6e6e6"/><rect x="380" y="1240.0" width="2420" height="2" fill="#e6e6e6"/><rect x="380" y="1050.0" width="2420" height="2" fill="#e6e6e6"/><rect x="380" y="860.0" width="2420" height="2" fill="#e6e6e6"/><rect x="380" y="670.0" width="2420" height="2" fill="#e6e6e6"/><rect x="380" y="480.0" width="2420" height="2" fill="#e6e6e6"/><rect x="380" y="288.0" width="2420" height="2" fill="#e6e6e6"/><rect x="466" y="1811.5" width="14" height="188.5" fill="#f0847a" shape-rendering="crispEdges"/><rect x="466" y="1621.5" width="14" height="188.0" fill="#8dc87e" shape-rendering="crispEdges"/><rect x="498" y="1621.5" width="13" height="378.5" fill="#f0847a" shape-rendering="crispEdges"/><rect x="576" y="1621.5" width="13" height="378.5" fill="#8dc87e" shape-rendering="crispEdges"/><rect x="591" y="1431.5" width="14" height="568.5" fill="#f0847a" shape-rendering="crispEdges"/><rect x="591" y="861.5" width="14" height="568.0" fill="#8dc87e" shape-rendering="crispEdges"/><rect x="607" y="1811.5" width="13" height="188.5" fill="#8dc87e" shape-rendering="crispEdges"/><rect x="669" y="1811.5" width="14" height="188.5" fill="#f0847a" shape-rendering="crispEdges"/><rect x="685" y="1811.5" width="14" height="188.5" fill="#8dc87e" shape-rendering="crispEdges"/><rect x="716" y="1811.5" width="14" height="188.5" fill="#8dc87e" shape-rendering="crispEdges"/><rect x="794" y="1431.5" width="14" height="568.5" fill="#8dc87e" shape-rendering="crispEdges"/><rect x="810" y="1811.5" width="13" height="188.5" fill="#8dc87e" shape-rendering="crispEdges"/><rect x="825" y="1811.5" width="14" height="188.5" fill="#8dc87e" shape-rendering="crispEdges"/><rect x="904" y="1811.5" width="13" height="188.5" fill="#8dc87e" shape-rendering="crispEdges"/><rect x="919" y="1621.5" width="14" height="378.5" fill="#8dc87e" shape-rendering="crispEdges"/><rect x="935" y="1811.5" width="13" height="188.5" fill="#8dc87e" shape-rendering="crispEdges"/><rect x="997" y="1811.5" width="14" height="188.5" fill="#8dc87e" shape-rendering="crispEdges"/><rect x="1013" y="1811.5" width="13" height="188.5" fill="#fdb26c" shape-rendering="crispEdges"/><rect x="1028" y="1431.5" width="14" height="568.5" fill="#8dc87e" shape-rendering="crispEdges"/><rect x="1060" y="1811.5" width="13" height="188.5" fill="#8dc87e" shape-rendering="crispEdges"/><rect x="1106" y="1431.5" width="14" height="568.5" fill="#8dc87e" shape-rendering="crispEdges"/><rect x="1122" y="1811.5" width="14" height="188.5" fill="#f0847a" shape-rendering="crispEdges"/><rect x="1122" y="1431.5" width="14" height="378.0" fill="#8dc87e" shape-rendering="crispEdges"/><rect x="1138" y="1811.5" width="13" height="188.5" fill="#8dc87e" shape-rendering="crispEdges"/><rect x="1169" y="1811.5" width="14" height="188.5" fill="#8dc87e" shape-rendering="crispEdges"/><rect x="1231" y="1811.5" width="14" height="188.5" fill="#f0847a" shape-rendering="crispEdges"/><rect x="1231" y="1431.5" width="14" height="378.0" fill="#8dc87e" shape-rendering="crispEdges"/><rect x="1247" y="1241.5" width="14" height="758.5" fill="#8dc87e" shape-rendering="crispEdges"/><rect x="1325" y="1621.5" width="14" height="378.5" fill="#8dc87e" shape-rendering="crispEdges"/><rect x="1356" y="1811.5" width="14" height="188.5" fill="#8dc87e" shape-rendering="crispEdges"/><rect x="1372" y="1811.5" width="14" height="188.5" fill="#f0847a" shape-rendering="crispEdges"/><rect x="1372" y="1621.5" width="14" height="188.0" fill="#8dc87e" shape-rendering="crispEdges"/><rect x="1388" y="1811.5" width="13" height="188.5" fill="#8dc87e" shape-rendering="crispEdges"/><rect x="1434" y="1811.5" width="14" height="188.5" fill="#8dc87e" shape-rendering="crispEdges"/><rect x="1450" y="1811.5" width="14" height="188.5" fill="#8dc87e" shape-rendering="crispEdges"/><rect x="1466" y="1241.5" width="13" height="758.5" fill="#8dc87e" shape-rendering="crispEdges"/><rect x="1544" y="1811.5" width="13" height="188.5" fill="#8dc87e" shape-rendering="crispEdges"/><rect x="1559" y="1431.5" width="14" height="568.5" fill="#8dc87e" shape-rendering="crispEdges"/><rect x="1591" y="1811.5" width="13" height="188.5" fill="#fdb26c" shape-rendering="crispEdges"/><rect x="1606" y="481.5" width="14" height="1518.5" fill="#8dc87e" shape-rendering="crispEdges"/><rect x="1684" y="1811.5" width="14" height="188.5" fill="#fdb26c" shape-rendering="crispEdges"/><rect x="1700" y="1811.5" width="13" height="188.5" fill="#8dc87e" shape-rendering="crispEdges"/><rect x="1762" y="1811.5" width="14" height="188.5" fill="#8dc87e" shape-rendering="crispEdges"/><rect x="1778" y="1811.5" width="14" height="188.5" fill="#f0847a" shape-rendering="crispEdges"/><rect x="1778" y="1621.5" width="14" height="188.0" fill="#8dc87e" shape-rendering="crispEdges"/><rect x="1809" y="1621.5" width="14" height="378.5" fill="#8dc87e" shape-rendering="crispEdges"/><rect x="1887" y="1811.5" width="14" height="188.5" fill="#fdb26c" shape-rendering="crispEdges"/><rect x="1887" y="1621.5" width="14" height="188.0" fill="#8dc87e" shape-rendering="crispEdges"/><rect x="1903" y="1811.5" width="13" height="188.5" fill="#f0847a" shape-rendering="crispEdges"/><rect x="1903" y="1621.5" width="13" height="188.0" fill="#8dc87e" shape-rendering="crispEdges"/><rect x="1918" y="1811.5" width="14" height="188.5" fill="#6dcae3" shape-rendering="crispEdges"/><rect x="1918" y="1621.5" width="14" height="188.0" fill="#fdb26c" shape-rendering="crispEdges"/><rect x="1918" y="1241.5" width="14" height="378.0" fill="#8dc87e" shape-rendering="crispEdges"/><rect x="1934" y="1811.5" width="14" height="188.5" fill="#fdb26c" shape-rendering="crispEdges"/><rect x="2028" y="1811.5" width="13" height="188.5" fill="#6dcae3" shape-rendering="crispEdges"/><rect x="2043" y="1811.5" width="14" height="188.5" fill="#8dc87e" shape-rendering="crispEdges"/><rect x="2090" y="1811.5" width="14" height="188.5" fill="#f0847a" shape-rendering="crispEdges"/><rect x="2090" y="1051.5" width="14" height="758.0" fill="#8dc87e" shape-rendering="crispEdges"/><rect x="2121" y="861.5" width="14" height="1138.5" fill="#8dc87e" shape-rendering="crispEdges"/><rect x="2137" y="1811.5" width="14" height="188.5" fill="#fdb26c" shape-rendering="crispEdges"/><rect x="2137" y="1431.5" width="14" height="378.0" fill="#8dc87e" shape-rendering="crispEdges"/><rect x="2246" y="1811.5" width="14" height="188.5" fill="#8dc87e" shape-rendering="crispEdges"/><rect x="2262" y="1241.5" width="14" height="758.5" fill="#8dc87e" shape-rendering="crispEdges"/><rect x="2278" y="1811.5" width="13" height="188.5" fill="#fdb26c" shape-rendering="crispEdges"/><rect x="2340" y="1811.5" width="14" height="188.5" fill="#fdb26c" shape-rendering="crispEdges"/><rect x="2340" y="1621.5" width="14" height="188.0" fill="#8dc87e" shape-rendering="crispEdges"/><rect x="2371" y="1811.5" width="14" height="188.5" fill="#6dcae3" shape-rendering="crispEdges"/><rect x="2371" y="1621.5" width="14" height="188.0" fill="#fdb26c" shape-rendering="crispEdges"/><rect x="2418" y="1431.5" width="14" height="568.5" fill="#8dc87e" shape-rendering="crispEdges"/><rect x="2434" y="1811.5" width="13" height="188.5" fill="#fdb26c" shape-rendering="crispEdges"/><rect x="2434" y="1431.5" width="13" height="378.0" fill="#8dc87e" shape-rendering="crispEdges"/><rect x="2449" y="1431.5" width="14" height="568.5" fill="#8dc87e" shape-rendering="crispEdges"/><rect x="2465" y="1431.5" width="14" height="568.5" fill="#8dc87e" shape-rendering="crispEdges"/><rect x="2481" y="1621.5" width="13" height="378.5" fill="#f0847a" shape-rendering="crispEdges"/><rect x="2527" y="1621.5" width="14" height="378.5" fill="#8dc87e" shape-rendering="crispEdges"/><rect x="2543" y="1811.5" width="14" height="188.5" fill="#6dcae3" shape-rendering="crispEdges"/><rect x="2543" y="1241.5" width="14" height="568.0" fill="#8dc87e" shape-rendering="crispEdges"/><rect x="2559" y="1811.5" width="13" height="188.5" fill="#6dcae3" shape-rendering="crispEdges"/><rect x="2559" y="1241.5" width="13" height="568.0" fill="#8dc87e" shape-rendering="crispEdges"/><rect x="2621" y="1811.5" width="14" height="188.5" fill="#8dc87e" shape-rendering="crispEdges"/><rect x="2699" y="1811.5" width="14" height="188.5" fill="#8dc87e" shape-rendering="crispEdges"/><rect x="2762" y="1811.5" width="13" height="188.5" fill="#8dc87e" shape-rendering="crispEdges"/><rect x="380" y="2000" width="2420" height="2" fill="#ccd6eb"/><rect x="558.0" y="2002" width="2" height="18" fill="#ccd6eb"/><rect x="776.6" y="2002" width="2" height="18" fill="#ccd6eb"/><rect x="995.2" y="2002" width="2" height="18" fill="#ccd6eb"/><rect x="1213.8" y="2002" width="2" height="18" fill="#ccd6eb"/><rect x="1432.4" y="2002" width="2" height="18" fill="#ccd6eb"/><rect x="1651.0" y="2002" width="2" height="18" fill="#ccd6eb"/><rect x="1869.6" y="2002" width="2" height="18" fill="#ccd6eb"/><rect x="2088.2" y="2002" width="2" height="18" fill="#ccd6eb"/><rect x="2306.8" y="2002" width="2" height="18" fill="#ccd6eb"/><rect x="2525.4" y="2002" width="2" height="18" fill="#ccd6eb"/><rect x="2744.0" y="2002" width="2" height="18" fill="#ccd6eb"/><path d="M473.1,1676.9 L492.4,1679.2 L511.7,1681.5 L531.0,1683.6 L550.3,1685.6 L569.5,1687.4 L588.8,1689.1 L608.1,1690.7 L627.4,1692.2 L646.7,1693.6 L666.0,1694.8 L685.3,1696.0 L704.6,1697.0 L723.8,1697.9 L743.1,1698.8 L762.4,1699.5 L781.7,1700.1 L801.0,1700.6 L820.3,1701.1 L839.6,1701.4 L858.9,1701.6 L878.2,1701.8 L897.4,1701.9 L916.7,1701.9 L936.0,1701.8 L955.3,1701.6 L974.6,1701.4 L993.9,1701.1 L1013.2,1700.7 L1032.5,1700.3 L1051.7,1699.8 L1071.0,1699.2 L1090.3,1698.6 L1109.6,1697.9 L1128.9,1697.2 L1148.2,1696.4 L1167.5,1695.6 L1186.8,1694.7 L1206.1,1693.8 L1225.3,1692.9 L1244.6,1691.9 L1263.9,1690.8 L1283.2,1689.8 L1302.5,1688.7 L1321.8,1687.6 L1341.1,1686.4 L1360.4,1685.2 L1379.6,1684.0 L1398.9,1682.8 L1418.2,1681.6 L1437.5,1680.4 L1456.8,1679.1 L1476.1,1677.9 L1495.4,1676.6 L1514.7,1675.4 L1534.0,1674.1 L1553.2,1672.8 L1572.5,1671.6 L1591.8,1670.3 L1611.1,1669.1 L1630.4,1667.9 L1649.7,1666.7 L1669.0,1665.5 L1688.3,1664.3 L1707.5,1663.2 L1726.8,1662.1 L1746.1,1661.0 L1765.4,1659.9 L1784.7,1658.9 L1804.0,1657.9 L1823.3,1656.9 L1842.6,1656.0 L1861.9,1655.2 L1881.1,1654.3 L1900.4,1653.6 L1919.7,1652.8 L1939.0,1652.2 L1958.3,1651.5 L1977.6,1651.0 L1996.9,1650.5 L2016.2,1650.1 L2035.4,1649.7 L2054.7,1649.4 L2074.0,1649.2 L2093.3,1649.0 L2112.6,1649.0 L2131.9,1649.0 L2151.2,1649.0 L2170.5,1649.2 L2189.8,1649.5 L2209.0,1649.8 L2228.3,1650.3 L2247.6,1650.8 L2266.9,1651.4 L2286.2,1652.2 L2305.5,1653.0 L2324.8,1653.9 L2344.1,1655.0 L2363.3,1656.1 L2382.6,1657.4 L2401.9,1658.8 L2421.2,1660.3 L2440.5,1661.9 L2459.8,1663.6 L2479.1,1665.5 L2498.4,1667.5 L2517.7,1669.6 L2536.9,1671.8 L2556.2,1674.2 L2575.5,1676.7 L2594.8,1679.4 L2614.1,1682.2 L2633.4,1685.2 L2652.7,1688.3 L2672.0,1691.5 L2691.2,1694.9 L2710.5,1698.5 L2729.8,1702.2 L2749.1,1706.1 L2768.4,1710.1" fill="none" stroke="#52b348" stroke-width="4" stroke-dasharray="32,12,4,12"/></svg><div id="t24" style="position:absolute;top:2019.90px;font-size:24px;line-height:24px;color:#555;font-weight:400;white-space:pre;letter-spacing:0.000px;transform:scaleX(0.9700);transform-origin:50% 0;left:359.00px;width:400px;text-align:center;">12 Mar</div><div id="t25" style="position:absolute;top:2019.90px;font-size:24px;line-height:24px;color:#555;font-weight:400;white-space:pre;letter-spacing:0.000px;transform:scaleX(0.9700);transform-origin:50% 0;left:577.60px;width:400px;text-align:center;">26 Mar</div><div id="t26" style="position:absolute;top:2019.90px;font-size:24px;line-height:24px;color:#555;font-weight:400;white-space:pre;letter-spacing:0.000px;transform:scaleX(0.9700);transform-origin:50% 0;left:796.20px;width:400px;text-align:center;">09 Apr</div><div id="t27" style="position:absolute;top:2019.90px;font-size:24px;line-height:24px;color:#555;font-weight:400;white-space:pre;letter-spacing:0.000px;transform:scaleX(0.9700);transform-origin:50% 0;left:1014.80px;width:400px;text-align:center;">23 Apr</div><div id="t28" style="position:absolute;top:2019.90px;font-size:24px;line-height:24px;color:#555;font-weight:400;white-space:pre;letter-spacing:0.000px;transform:scaleX(0.9700);transform-origin:50% 0;left:1233.40px;width:400px;text-align:center;">07 May</div><div id="t29" style="position:absolute;top:2019.90px;font-size:24px;line-height:24px;color:#555;font-weight:400;white-space:pre;letter-spacing:0.000px;transform:scaleX(0.9700);transform-origin:50% 0;left:1452.00px;width:400px;text-align:center;">21 May</div><div id="t30" style="position:absolute;top:2019.90px;font-size:24px;line-height:24px;color:#555;font-weight:400;white-space:pre;letter-spacing:0.000px;transform:scaleX(0.9700);transform-origin:50% 0;left:1670.60px;width:400px;text-align:center;">04 Jun</div><div id="t31" style="position:absolute;top:2019.90px;font-size:24px;line-height:24px;color:#555;font-weight:400;white-space:pre;letter-spacing:0.000px;transform:scaleX(0.9700);transform-origin:50% 0;left:1889.20px;width:400px;text-align:center;">18 Jun</div><div id="t32" style="position:absolute;top:2019.90px;font-size:24px;line-height:24px;color:#555;font-weight:400;white-space:pre;letter-spacing:0.000px;transform:scaleX(0.9700);transform-origin:50% 0;left:2107.80px;width:400px;text-align:center;">02 Jul</div><div id="t33" style="position:absolute;top:2019.90px;font-size:24px;line-height:24px;color:#555;font-weight:400;white-space:pre;letter-spacing:0.000px;transform:scaleX(0.9700);transform-origin:50% 0;left:2326.40px;width:400px;text-align:center;">16 Jul</div><div id="t34" style="position:absolute;top:2019.90px;font-size:24px;line-height:24px;color:#555;font-weight:400;white-space:pre;letter-spacing:0.000px;transform:scaleX(0.9700);transform-origin:50% 0;left:2545.00px;width:400px;text-align:center;">30 Jul</div><div id="t35" style="position:absolute;top:1990.20px;font-size:24px;line-height:24px;color:#666;font-weight:400;white-space:pre;letter-spacing:0.000px;left:337.00px;">0</div><div id="t36" style="position:absolute;top:1800.20px;font-size:24px;line-height:24px;color:#666;font-weight:400;white-space:pre;letter-spacing:0.000px;left:337.00px;">1</div><div id="t37" style="position:absolute;top:1610.20px;font-size:24px;line-height:24px;color:#666;font-weight:400;white-space:pre;letter-spacing:0.000px;left:337.00px;">2</div><div id="t38" style="position:absolute;top:1420.20px;font-size:24px;line-height:24px;color:#666;font-weight:400;white-space:pre;letter-spacing:0.000px;left:337.00px;">3</div><div id="t39" style="position:absolute;top:1230.20px;font-size:24px;line-height:24px;color:#666;font-weight:400;white-space:pre;letter-spacing:0.000px;left:337.00px;">4</div><div id="t40" style="position:absolute;top:1040.20px;font-size:24px;line-height:24px;color:#666;font-weight:400;white-space:pre;letter-spacing:0.000px;left:337.00px;">5</div><div id="t41" style="position:absolute;top:850.20px;font-size:24px;line-height:24px;color:#666;font-weight:400;white-space:pre;letter-spacing:0.000px;left:337.00px;">6</div><div id="t42" style="position:absolute;top:660.20px;font-size:24px;line-height:24px;color:#666;font-weight:400;white-space:pre;letter-spacing:0.000px;left:337.00px;">7</div><div id="t43" style="position:absolute;top:470.20px;font-size:24px;line-height:24px;color:#666;font-weight:400;white-space:pre;letter-spacing:0.000px;left:337.00px;">8</div><div id="t44" style="position:absolute;top:278.20px;font-size:24px;line-height:24px;color:#666;font-weight:400;white-space:pre;letter-spacing:0.000px;left:337.00px;">9</div><svg style="position:absolute;left:280px;top:1000px;" width="60" height="300" viewBox="0 0 60 300"><text x="37" y="144" transform="rotate(-90 37 144)" text-anchor="middle" font-family="Liberation Sans" font-size="26" fill="#666" textLength="212" lengthAdjust="spacing">Daily Throughput</text></svg><svg style="position:absolute;left:2730px;top:262px;" width="54" height="46" viewBox="0 0 54 46"><rect x="3" y="6" width="48" height="34" fill="#fbfbfb"/><path d="M14,13 H42 M14,23 H42 M14,33 H42" stroke="#666" stroke-width="6" stroke-linecap="round"/></svg><div style="position:absolute;left:382px;top:250px;width:940px;height:700px;background:#fefefe;border-radius:12px;box-shadow:0 10px 36px rgba(0,0,0,0.055), 0 2px 8px rgba(0,0,0,0.03);"></div><div style="position:absolute;left:590px;top:862px;width:14px;height:88px;background:#f8f8f8"></div><div id="t45" style="position:absolute;top:278.65px;font-size:33px;line-height:33px;color:#555;font-weight:400;white-space:pre;letter-spacing:0.470px;left:413.00px;">Throughput Breakdown</div><svg style="position:absolute;left:1210px;top:265px;" width="100" height="50" viewBox="0 0 2420 1210"><g fill="#555"><polygon points="340,318 478,318 478,380 408,380 408,455 340,455"/><polygon points="828,318 965,318 965,455 897,455 897,380 828,380"/><polygon points="340,800 408,800 408,875 478,875 478,940 340,940"/><polygon points="897,800 965,800 965,940 828,940 828,875 897,875"/></g><rect x="522" y="497" width="271" height="265" fill="none" stroke="#555" stroke-width="65"/><path d="M1700,395 L2120,815 M2120,395 L1700,815" stroke="#777" stroke-width="85"/></svg><div style="position:absolute;left:412px;top:322px;width:80px;height:80px;background:#fdfdfd;border-radius:14px;box-shadow:0 4px 14px rgba(0,0,0,0.07)"></div><svg style="position:absolute;left:400px;top:310px;" width="100" height="100" viewBox="0 0 1512 1512"><rect x="440" y="440" width="57" height="660" fill="#7a7a7a"/><rect x="495" y="554" width="610" height="440" fill="none" stroke="#7a7a7a" stroke-width="48"/><rect x="595" y="554" width="53" height="440" fill="#7a7a7a"/><rect x="838" y="554" width="55" height="440" fill="#7a7a7a"/></svg><svg style="position:absolute;left:0px;top:0px;" width="1400" height="1000" viewBox="0 0 1400 1000"><path d="M880,689 L880.00,499.00 A190,190 0 1 1 693.05,655.07 Z" fill="#8fca80" stroke="#fff" stroke-width="2.5" stroke-linejoin="round"/><path d="M880,689 L693.05,655.07 A190,190 0 0 1 731.45,570.54 Z" fill="#fdb26c" stroke="#fff" stroke-width="2.5" stroke-linejoin="round"/><path d="M880,689 L731.45,570.54 A190,190 0 0 1 837.72,503.76 Z" fill="#f0847a" stroke="#fff" stroke-width="2.5" stroke-linejoin="round"/><path d="M880,689 L837.72,503.76 A190,190 0 0 1 880.00,499.00 Z" fill="#6dcae3" stroke="#fff" stroke-width="2.5" stroke-linejoin="round"/><path d="M843.8,437.6 C852,445 857,470 858,498" fill="none" stroke="#6dcae3" stroke-width="2.2"/><path d="M732,480.5 C750,487 768,505 778,525.7" fill="none" stroke="#f0847a" stroke-width="2.2"/><path d="M641,583.8 C665,590 688,600 705.7,609" fill="none" stroke="#fdb26c" stroke-width="2.2"/><path d="M1002,835.5 C1020,858 1033,878 1051,881.6" fill="none" stroke="#8fca80" stroke-width="2.2"/></svg><div id="t46" style="position:absolute;top:431.86px;font-size:21.7px;line-height:21.7px;color:#111;font-weight:400;white-space:pre;letter-spacing:0.654px;left:544.80px;">Intangible: (5 items) 3.57%</div><div id="t47" style="position:absolute;top:474.75px;font-size:21.7px;line-height:21.7px;color:#111;font-weight:400;white-space:pre;letter-spacing:0.136px;left:434.00px;">Expedite: (15 items) 10.71%</div><div id="t48" style="position:absolute;top:580.05px;font-size:21.7px;line-height:21.7px;color:#111;font-weight:400;white-space:pre;letter-spacing:0.670px;left:413.00px;">Fixed Delivery Date:</div><div id="t49" style="position:absolute;top:607.85px;font-size:21.7px;line-height:21.7px;color:#111;font-weight:400;white-space:pre;letter-spacing:-0.089px;left:413.00px;">(11 items) 7.86%</div><div id="t50" style="position:absolute;top:876.15px;font-size:21.7px;line-height:21.7px;color:#111;font-weight:400;white-space:pre;letter-spacing:0.538px;left:1070.70px;">Standard: (109 items)</div><div id="t51" style="position:absolute;top:904.05px;font-size:21.7px;line-height:21.7px;color:#111;font-weight:400;white-space:pre;letter-spacing:-0.253px;left:1070.70px;">77.86%</div><div style="position:absolute;left:1338px;top:252px;width:540px;height:459px;background:#fefefe;border-radius:12px;box-shadow:0 10px 36px rgba(0,0,0,0.055), 0 2px 8px rgba(0,0,0,0.03);"></div><div style="position:absolute;left:1606px;top:616px;width:14px;height:95px;background:#f8f8f8"></div><div id="t52" style="position:absolute;top:279.95px;font-size:33px;line-height:33px;color:#555;font-weight:400;white-space:pre;letter-spacing:0.578px;left:1369.00px;">Throughput</div><svg style="position:absolute;left:1825px;top:275px;" width="40" height="36" viewBox="0 0 40 36"><path d="M10,8 L29.7,26.6 M29.7,8 L10,26.6" stroke="#777" stroke-width="3.6"/></svg><div id="t53" style="position:absolute;top:341.48px;font-size:46.5px;line-height:46.5px;color:#555;font-weight:700;white-space:pre;letter-spacing:0.000px;transform:scaleX(0.9057);transform-origin:0 0;left:1511.00px;">140 items</div><svg style="position:absolute;left:0px;top:0px;" width="1900" height="800" viewBox="0 0 1900 800"><rect x="1370" y="342" width="2" height="302" fill="#e6e6e6"/><rect x="1368.6" y="643.5" width="479.4" height="2" fill="#ccd6eb"/><rect x="1548" y="645" width="2" height="18" fill="#ccd6eb"/><rect x="1744" y="645" width="2" height="18" fill="#ccd6eb"/><path d="M1371.90,583.65 C1371.90,583.65 1385.71,583.65 1394.92,583.65 C1396.19,583.65 1396.83,463.02 1398.10,463.02 C1399.49,463.02 1400.19,613.81 1401.59,613.81 C1410.67,613.81 1415.21,613.81 1424.29,613.81 C1430.00,613.81 1432.86,553.49 1438.57,553.49 C1440.16,553.49 1440.95,613.81 1442.54,613.81 C1450.79,613.81 1454.92,613.81 1463.17,613.81 C1464.00,613.81 1464.41,583.65 1465.24,583.65 C1466.32,583.65 1466.86,613.81 1467.94,613.81 C1474.60,613.81 1477.94,613.81 1484.60,613.81 C1485.87,613.81 1486.51,553.49 1487.78,553.49 C1490.32,553.49 1491.59,613.81 1494.13,613.81 C1497.94,613.81 1499.84,553.49 1503.65,553.49 C1505.24,553.49 1506.03,553.49 1507.62,553.49 C1508.57,553.49 1509.05,613.81 1510.00,613.81 C1512.86,613.81 1514.29,613.81 1517.14,613.81 C1523.49,613.81 1526.67,523.33 1533.02,523.33 C1541.59,523.33 1545.87,613.81 1554.44,613.81 C1556.03,613.81 1556.83,583.65 1558.41,583.65 C1559.37,583.65 1559.84,613.81 1560.79,613.81 C1566.51,613.81 1569.37,613.81 1575.08,613.81 C1576.03,613.81 1576.51,523.33 1577.46,523.33 C1583.81,523.33 1586.98,613.81 1593.33,613.81 C1594.60,613.81 1595.24,553.49 1596.51,553.49 C1599.05,553.49 1600.32,613.81 1602.86,613.81 C1604.25,613.81 1604.95,402.70 1606.35,402.70 C1612.38,402.70 1615.40,613.81 1621.43,613.81 C1628.10,613.81 1631.43,613.81 1638.10,613.81 C1639.37,613.81 1640.00,583.65 1641.27,583.65 C1651.43,583.65 1656.51,583.65 1666.67,583.65 C1668.13,583.65 1668.86,523.33 1670.32,523.33 C1671.71,523.33 1672.41,613.81 1673.81,613.81 C1683.02,613.81 1687.62,613.81 1696.83,613.81 C1702.73,613.81 1705.68,463.02 1711.59,463.02 C1712.67,463.02 1713.21,547.16 1714.29,553.49 C1723.49,607.48 1728.10,613.81 1737.30,613.81 C1738.70,613.81 1739.40,523.33 1740.79,523.33 C1741.94,523.33 1742.51,613.81 1743.65,613.81 C1748.73,613.81 1751.27,583.65 1756.35,583.65 C1759.21,583.65 1760.63,583.65 1763.49,583.65 C1766.98,583.65 1768.73,553.49 1772.22,553.49 C1776.35,553.49 1778.41,553.49 1782.54,553.49 C1783.81,553.49 1784.44,583.65 1785.71,583.65 C1789.52,583.65 1791.43,583.65 1795.24,583.65 C1796.83,583.65 1797.62,523.33 1799.21,523.33 C1800.16,523.33 1800.63,523.33 1801.59,523.33 C1806.35,523.33 1808.73,613.81 1813.49,613.81 C1825.87,613.81 1844.44,613.81 1844.44,613.81" fill="none" stroke="#0a87b5" stroke-width="4.6" stroke-linejoin="round" stroke-linecap="round"/></svg><div id="t54" style="position:absolute;top:662.20px;font-size:23.3px;line-height:23.3px;color:#666;font-weight:400;white-space:pre;letter-spacing:0.000px;transform:scaleX(0.9451);transform-origin:0 0;left:1502.00px;">May 2018</div><div id="t55" style="position:absolute;top:662.20px;font-size:23.3px;line-height:23.3px;color:#666;font-weight:400;white-space:pre;letter-spacing:0.000px;transform:scaleX(0.9195);transform-origin:0 0;left:1705.00px;">Jul 2018</div><div style="position:absolute;left:1894px;top:252px;width:600px;height:484px;background:#fefefe;border-radius:12px;box-shadow:0 10px 36px rgba(0,0,0,0.055), 0 2px 8px rgba(0,0,0,0.03);"></div><svg style="position:absolute;left:2440px;top:273px;" width="40" height="40" viewBox="0 0 40 40"><path d="M10.7,10 L30,28.7 M30,10 L10.7,28.7" stroke="#666" stroke-width="3.6"/></svg><div id="t56" style="position:absolute;top:281.83px;font-size:28.2px;line-height:28.2px;color:#555;font-weight:400;white-space:pre;letter-spacing:-0.173px;left:1925.00px;">Date: 14 Jun 2018</div><div id="t57" style="position:absolute;top:330.73px;font-size:28.2px;line-height:28.2px;color:#555;font-weight:400;white-space:pre;letter-spacing:0.494px;left:1925.00px;">Throughput: 1 item</div><div id="t58" style="position:absolute;top:378.33px;font-size:28.2px;line-height:28.2px;color:#555;font-weight:400;white-space:pre;letter-spacing:0.143px;left:1925.00px;">Cycle time: 7d 5h 41m</div><div style="position:absolute;left:1924px;top:425px;width:540px;height:2px;background:#dedede"></div><svg style="position:absolute;left:1920px;top:450px;" width="30" height="30" viewBox="0 0 30 30"><circle cx="12" cy="14" r="8" fill="#6dcae3"/></svg><div id="t59" style="position:absolute;top:453.90px;font-size:26px;line-height:26px;color:#555;font-weight:400;white-space:pre;letter-spacing:1.005px;left:1957.00px;">Migrate automation tests to NodeJS</div><svg style="position:absolute;left:2430px;top:455px;" width="36" height="24" viewBox="0 0 36 24"><polyline points="6.5,6 17.7,17.5 29,6" fill="none" stroke="#3a3a3a" stroke-width="2.1"/></svg><div id="t60" style="position:absolute;top:509.60px;font-size:26px;line-height:26px;color:#555;font-weight:400;white-space:pre;letter-spacing:0.948px;left:1957.00px;">Label: Intangible</div><div id="t61" style="position:absolute;top:564.90px;font-size:26px;line-height:26px;color:#2b7bbd;font-weight:400;white-space:pre;letter-spacing:0.856px;left:1957.00px;">Open in Jira</div><div id="t62" style="position:absolute;top:622.00px;font-size:26px;line-height:26px;color:#555;font-weight:400;white-space:pre;letter-spacing:0.266px;left:1957.00px;">Cycle time: 7d 5h 41m</div><div id="t63" style="position:absolute;top:677.30px;font-size:26px;line-height:26px;color:#555;font-weight:400;white-space:pre;letter-spacing:0.404px;left:1957.00px;">Development: 7d 5h 41m</div><div style="position:absolute;left:2840px;top:0px;width:520px;height:2100px;background:#fbfbfb"></div><div style="position:absolute;left:2840px;top:0px;width:520px;height:118px;background:#02506c"></div><svg style="position:absolute;left:2872px;top:52px;" width="36" height="26" viewBox="0 0 36 26"><polyline points="3.5,4 18,17.5 32.5,4" fill="none" stroke="#fff" stroke-width="4.4"/></svg><div id="t64" style="position:absolute;top:40.80px;font-size:36px;line-height:36px;color:#fff;font-weight:700;white-space:pre;letter-spacing:0.000px;transform:scaleX(0.8514);transform-origin:0 0;left:2929.00px;">Controls</div><div style="position:absolute;left:2840px;top:120px;width:8px;height:194px;background:#02506c"></div><svg style="position:absolute;left:2872px;top:170px;" width="36" height="26" viewBox="0 0 36 26"><polyline points="3.5,4 18,17.5 32.5,4" fill="none" stroke="#333" stroke-width="4.4"/></svg><div id="t65" style="position:absolute;top:159.95px;font-size:33px;line-height:33px;color:#555;font-weight:700;white-space:pre;letter-spacing:0.000px;transform:scaleX(0.9270);transform-origin:0 0;left:2929.00px;">Trendline</div><svg style="position:absolute;left:2928px;top:236px;" width="28" height="28" viewBox="0 0 28 28"><rect x="1" y="1" width="26" height="26" rx="4" fill="#fff" stroke="#404040" stroke-width="2.2"/><polyline points="5.5,15.5 11.4,21.2 22,6.9" fill="none" stroke="#404040" stroke-width="2.9" stroke-linecap="round" stroke-linejoin="round"/></svg><div id="t66" style="position:absolute;top:234.23px;font-size:27.5px;line-height:27.5px;color:#444;font-weight:400;white-space:pre;letter-spacing:0.844px;left:2974.00px;">Enabled</div><div style="position:absolute;left:2848px;top:314px;width:512px;height:2px;background:#e6e6e6"></div><div style="position:absolute;left:2840px;top:316px;width:8px;height:292px;background:#02506c"></div><svg style="position:absolute;left:2872px;top:366px;" width="36" height="26" viewBox="0 0 36 26"><polyline points="3.5,4 18,17.5 32.5,4" fill="none" stroke="#333" stroke-width="4.4"/></svg><div id="t67" style="position:absolute;top:354.95px;font-size:33px;line-height:33px;color:#555;font-weight:700;white-space:pre;letter-spacing:0.000px;transform:scaleX(0.9341);transform-origin:0 0;left:2929.00px;">Group by</div><svg style="position:absolute;left:2928px;top:424px;" width="28" height="28" viewBox="0 0 28 28"><circle cx="14" cy="14" r="12.8" fill="#fff" stroke="#404040" stroke-width="2.2"/><circle cx="14" cy="14" r="7.5" fill="#4a4a4a"/></svg><div id="t68" style="position:absolute;top:422.62px;font-size:27.5px;line-height:27.5px;color:#444;font-weight:400;white-space:pre;letter-spacing:0.547px;left:2974.00px;">Day</div><svg style="position:absolute;left:2928px;top:482px;" width="28" height="28" viewBox="0 0 28 28"><circle cx="14" cy="14" r="12.8" fill="#fff" stroke="#404040" stroke-width="2.2"/></svg><div id="t69" style="position:absolute;top:480.62px;font-size:27.5px;line-height:27.5px;color:#444;font-weight:400;white-space:pre;letter-spacing:0.396px;left:2974.00px;">Week</div><svg style="position:absolute;left:2928px;top:540px;" width="28" height="28" viewBox="0 0 28 28"><circle cx="14" cy="14" r="12.8" fill="#fff" stroke="#404040" stroke-width="2.2"/></svg><div id="t70" style="position:absolute;top:538.62px;font-size:27.5px;line-height:27.5px;color:#444;font-weight:400;white-space:pre;letter-spacing:1.516px;left:2974.00px;">Month</div><div style="position:absolute;left:2840px;top:610px;width:520px;height:118px;background:#02506c"></div><svg style="position:absolute;left:2872px;top:661px;" width="36" height="26" viewBox="0 0 36 26"><polyline points="3.5,4 18,17.5 32.5,4" fill="none" stroke="#fff" stroke-width="4.4"/></svg><div id="t71" style="position:absolute;top:650.00px;font-size:36px;line-height:36px;color:#fff;font-weight:700;white-space:pre;letter-spacing:0.000px;transform:scaleX(0.8191);transform-origin:0 0;left:2929.50px;">Filters</div><div style="position:absolute;left:2840px;top:730px;width:8px;height:657px;background:#02506c"></div><svg style="position:absolute;left:2872px;top:779px;" width="36" height="26" viewBox="0 0 36 26"><polyline points="3.5,4 18,17.5 32.5,4" fill="none" stroke="#333" stroke-width="4.4"/></svg><div id="t72" style="position:absolute;top:774.55px;font-size:33px;line-height:33px;color:#555;font-weight:700;white-space:pre;letter-spacing:0.000px;transform:scaleX(0.9087);transform-origin:0 0;left:2929.00px;">Statuses</div><svg style="position:absolute;left:2928px;top:846px;" width="28" height="28" viewBox="0 0 28 28"><rect x="1" y="1" width="26" height="26" rx="4" fill="#fff" stroke="#404040" stroke-width="2.2"/></svg><div id="t73" style="position:absolute;top:845.62px;font-size:27.5px;line-height:27.5px;color:#444;font-weight:400;white-space:pre;letter-spacing:0.890px;left:2973.50px;">Select all</div><svg style="position:absolute;left:2928px;top:904px;" width="28" height="28" viewBox="0 0 28 28"><rect x="1" y="1" width="26" height="26" rx="4" fill="#fff" stroke="#404040" stroke-width="2.2"/></svg><div id="t74" style="position:absolute;top:903.62px;font-size:27.5px;line-height:27.5px;color:#444;font-weight:400;white-space:pre;letter-spacing:1.055px;left:2973.50px;">To do</div><svg style="position:absolute;left:2928px;top:962px;" width="28" height="28" viewBox="0 0 28 28"><rect x="1" y="1" width="26" height="26" rx="4" fill="#fff" stroke="#404040" stroke-width="2.2"/><polyline points="5.5,15.5 11.4,21.2 22,6.9" fill="none" stroke="#404040" stroke-width="2.9" stroke-linecap="round" stroke-linejoin="round"/></svg><div id="t75" style="position:absolute;top:961.62px;font-size:27.5px;line-height:27.5px;color:#444;font-weight:400;white-space:pre;letter-spacing:1.255px;left:2973.50px;">Development</div><svg style="position:absolute;left:2928px;top:1020px;" width="28" height="28" viewBox="0 0 28 28"><rect x="1" y="1" width="26" height="26" rx="4" fill="#fff" stroke="#404040" stroke-width="2.2"/><polyline points="5.5,15.5 11.4,21.2 22,6.9" fill="none" stroke="#404040" stroke-width="2.9" stroke-linecap="round" stroke-linejoin="round"/></svg><div id="t76" style="position:absolute;top:1019.62px;font-size:27.5px;line-height:27.5px;color:#444;font-weight:400;white-space:pre;letter-spacing:0.814px;left:2973.50px;">Code review</div><svg style="position:absolute;left:2928px;top:1078px;" width="28" height="28" viewBox="0 0 28 28"><rect x="1" y="1" width="26" height="26" rx="4" fill="#fff" stroke="#404040" stroke-width="2.2"/><polyline points="5.5,15.5 11.4,21.2 22,6.9" fill="none" stroke="#404040" stroke-width="2.9" stroke-linecap="round" stroke-linejoin="round"/></svg><div id="t77" style="position:absolute;top:1077.62px;font-size:27.5px;line-height:27.5px;color:#444;font-weight:400;white-space:pre;letter-spacing:0.733px;left:2973.50px;">Code review (Done)</div><svg style="position:absolute;left:2928px;top:1136px;" width="28" height="28" viewBox="0 0 28 28"><rect x="1" y="1" width="26" height="26" rx="4" fill="#fff" stroke="#404040" stroke-width="2.2"/><polyline points="5.5,15.5 11.4,21.2 22,6.9" fill="none" stroke="#404040" stroke-width="2.9" stroke-linecap="round" stroke-linejoin="round"/></svg><div id="t78" style="position:absolute;top:1135.62px;font-size:27.5px;line-height:27.5px;color:#444;font-weight:400;white-space:pre;letter-spacing:0.743px;left:2973.50px;">Testing</div><svg style="position:absolute;left:2928px;top:1194px;" width="28" height="28" viewBox="0 0 28 28"><rect x="1" y="1" width="26" height="26" rx="4" fill="#fff" stroke="#404040" stroke-width="2.2"/><polyline points="5.5,15.5 11.4,21.2 22,6.9" fill="none" stroke="#404040" stroke-width="2.9" stroke-linecap="round" stroke-linejoin="round"/></svg><div id="t79" style="position:absolute;top:1193.62px;font-size:27.5px;line-height:27.5px;color:#444;font-weight:400;white-space:pre;letter-spacing:0.627px;left:2973.50px;">Testing (Done)</div><svg style="position:absolute;left:2928px;top:1252px;" width="28" height="28" viewBox="0 0 28 28"><rect x="1" y="1" width="26" height="26" rx="4" fill="#fff" stroke="#404040" stroke-width="2.2"/><polyline points="5.5,15.5 11.4,21.2 22,6.9" fill="none" stroke="#404040" stroke-width="2.9" stroke-linecap="round" stroke-linejoin="round"/></svg><div id="t80" style="position:absolute;top:1251.62px;font-size:27.5px;line-height:27.5px;color:#444;font-weight:400;white-space:pre;letter-spacing:1.361px;left:2973.50px;">Deployment</div><svg style="position:absolute;left:2928px;top:1310px;" width="28" height="28" viewBox="0 0 28 28"><rect x="1" y="1" width="26" height="26" rx="4" fill="#fff" stroke="#404040" stroke-width="2.2"/><polyline points="5.5,15.5 11.4,21.2 22,6.9" fill="none" stroke="#404040" stroke-width="2.9" stroke-linecap="round" stroke-linejoin="round"/></svg><div id="t81" style="position:absolute;top:1309.62px;font-size:27.5px;line-height:27.5px;color:#444;font-weight:400;white-space:pre;letter-spacing:0.650px;left:2973.50px;">Done</div><div style="position:absolute;left:2848px;top:1387px;width:512px;height:2px;background:#e6e6e6"></div><div style="position:absolute;left:2840px;top:1389px;width:8px;height:427px;background:#02506c"></div><svg style="position:absolute;left:2872px;top:1439px;" width="36" height="26" viewBox="0 0 36 26"><polyline points="3.5,4 18,17.5 32.5,4" fill="none" stroke="#333" stroke-width="4.4"/></svg><div id="t82" style="position:absolute;top:1434.75px;font-size:33px;line-height:33px;color:#555;font-weight:700;white-space:pre;letter-spacing:0.000px;transform:scaleX(0.9157);transform-origin:0 0;left:2929.00px;">Priorities</div><svg style="position:absolute;left:2928px;top:1506px;" width="28" height="28" viewBox="0 0 28 28"><rect x="1" y="1" width="26" height="26" rx="4" fill="#fff" stroke="#404040" stroke-width="2.2"/><polyline points="5.5,15.5 11.4,21.2 22,6.9" fill="none" stroke="#404040" stroke-width="2.9" stroke-linecap="round" stroke-linejoin="round"/></svg><div id="t83" style="position:absolute;top:1506.12px;font-size:27.5px;line-height:27.5px;color:#444;font-weight:400;white-space:pre;letter-spacing:0.823px;left:2973.50px;">Select all</div><svg style="position:absolute;left:2928px;top:1564px;" width="28" height="28" viewBox="0 0 28 28"><rect x="1" y="1" width="26" height="26" rx="4" fill="#fff" stroke="#404040" stroke-width="2.2"/><polyline points="5.5,15.5 11.4,21.2 22,6.9" fill="none" stroke="#404040" stroke-width="2.9" stroke-linecap="round" stroke-linejoin="round"/></svg><svg style="position:absolute;left:2970px;top:1566px;" width="24" height="24" viewBox="0 0 24 24"><circle cx="12" cy="12" r="10" fill="#f0847a"/></svg><div id="t84" style="position:absolute;top:1564.12px;font-size:27.5px;line-height:27.5px;color:#444;font-weight:400;white-space:pre;letter-spacing:0.853px;left:3005.00px;">Expedite</div><svg style="position:absolute;left:2928px;top:1622px;" width="28" height="28" viewBox="0 0 28 28"><rect x="1" y="1" width="26" height="26" rx="4" fill="#fff" stroke="#404040" stroke-width="2.2"/><polyline points="5.5,15.5 11.4,21.2 22,6.9" fill="none" stroke="#404040" stroke-width="2.9" stroke-linecap="round" stroke-linejoin="round"/></svg><svg style="position:absolute;left:2970px;top:1624px;" width="24" height="24" viewBox="0 0 24 24"><circle cx="12" cy="12" r="10" fill="#fdb26c"/></svg><div id="t85" style="position:absolute;top:1622.12px;font-size:27.5px;line-height:27.5px;color:#444;font-weight:400;white-space:pre;letter-spacing:0.891px;left:3005.00px;">Fixed Delivery Date</div><svg style="position:absolute;left:2928px;top:1680px;" width="28" height="28" viewBox="0 0 28 28"><rect x="1" y="1" width="26" height="26" rx="4" fill="#fff" stroke="#404040" stroke-width="2.2"/><polyline points="5.5,15.5 11.4,21.2 22,6.9" fill="none" stroke="#404040" stroke-width="2.9" stroke-linecap="round" stroke-linejoin="round"/></svg><svg style="position:absolute;left:2970px;top:1682px;" width="24" height="24" viewBox="0 0 24 24"><circle cx="12" cy="12" r="10" fill="#6dcae3"/></svg><div id="t86" style="position:absolute;top:1680.12px;font-size:27.5px;line-height:27.5px;color:#444;font-weight:400;white-space:pre;letter-spacing:1.415px;left:3005.00px;">Intangible</div><svg style="position:absolute;left:2928px;top:1738px;" width="28" height="28" viewBox="0 0 28 28"><rect x="1" y="1" width="26" height="26" rx="4" fill="#fff" stroke="#404040" stroke-width="2.2"/><polyline points="5.5,15.5 11.4,21.2 22,6.9" fill="none" stroke="#404040" stroke-width="2.9" stroke-linecap="round" stroke-linejoin="round"/></svg><svg style="position:absolute;left:2970px;top:1740px;" width="24" height="24" viewBox="0 0 24 24"><circle cx="12" cy="12" r="10" fill="#8dc87e"/></svg><div id="t87" style="position:absolute;top:1738.12px;font-size:27.5px;line-height:27.5px;color:#444;font-weight:400;white-space:pre;letter-spacing:1.196px;left:3005.00px;">Standard</div><div style="position:absolute;left:2848px;top:1816px;width:512px;height:2px;background:#dadada"></div><div style="position:absolute;left:2840px;top:1818px;width:520px;height:116px;background:#f2f2f2"></div><div style="position:absolute;left:2840px;top:1818px;width:8px;height:282px;background:#d3d1d3"></div><div style="position:absolute;left:2848px;top:1934px;width:512px;height:2px;background:#dadada"></div><svg style="position:absolute;left:2880px;top:1858px;" width="30" height="36" viewBox="0 0 30 36"><polyline points="8,5 21,17.5 8,30" fill="none" stroke="#333" stroke-width="4.4"/></svg><div id="t88" style="position:absolute;top:1864.25px;font-size:33px;line-height:33px;color:#555;font-weight:700;white-space:pre;letter-spacing:0.000px;transform:scaleX(0.9483);transform-origin:0 0;left:2929.60px;">Members</div><div style="position:absolute;left:3184px;top:1924px;width:104px;height:104px;background:#555;border-radius:16px;box-shadow:0 6px 14px rgba(0,0,0,0.28)"></div><svg style="position:absolute;left:3184px;top:1924px;" width="104" height="104" viewBox="0 0 104 104"><ellipse cx="52.3" cy="49.5" rx="24.6" ry="20" fill="#fff"/><path d="M38,60 L33.6,75.8 C40,74 45,71 48,68 Z" fill="#fff"/></svg></body></html>
